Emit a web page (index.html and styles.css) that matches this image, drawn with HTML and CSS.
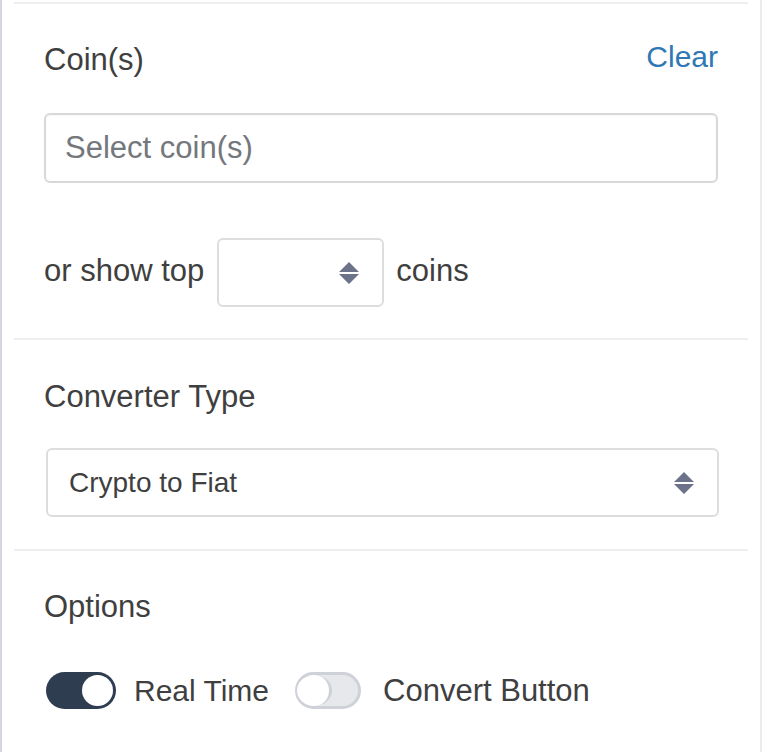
FILE: index.html
```html
<!DOCTYPE html>
<html>
<head>
<meta charset="utf-8">
<link rel="stylesheet" href="styles.css">
</head>
<body>
<div class="panel">
  <section class="section">
    <div class="head-row">
      <span class="label">Coin(s)</span>
      <a class="clear">Clear</a>
    </div>
    <div class="text-input">Select coin(s)</div>
    <div class="top-row">
      <span>or show top</span>
      <div class="num-input">
        <svg class="arrows" width="20" height="22" viewBox="0 0 20 22"><path d="M10 0 L20 10 L0 10 Z M0 12 L20 12 L10 22 Z" fill="#6b7289"/></svg>
      </div>
      <span>coins</span>
    </div>
  </section>
  <section class="section sec2">
    <div class="label">Converter Type</div>
    <div class="select-box">
      <span>Crypto to Fiat</span>
      <svg class="arrows" width="20" height="22" viewBox="0 0 20 22"><path d="M10 0 L20 10 L0 10 Z M0 12 L20 12 L10 22 Z" fill="#6b7289"/></svg>
    </div>
  </section>
  <section class="section sec3">
    <div class="label">Options</div>
    <div class="toggles">
      <span class="toggle on"><span class="knob"></span></span>
      <span class="toggle-label rt">Real Time</span>
      <span class="toggle off"><span class="knob"></span></span>
      <span class="toggle-label cb">Convert Button</span>
    </div>
  </section>
</div>
</body>
</html>
```

FILE: styles.css
```css
html, body {
  margin: 0;
  padding: 0;
  background: #fff;
}
body {
  font-family: "Liberation Sans", Arial, sans-serif;
  font-size: 31px;
  color: #3f3f3f;
}
.panel {
  width: 762px;
  height: 752px;
  box-sizing: border-box;
  border-left: 2px solid #d4d7dd;
  border-right: 2px solid #ebebeb;
  padding: 2px 12px 0;
}
.section {
  border-top: 2px solid #eeeeee;
  padding: 38px 30px 31px 30px;
}
.label {
  line-height: 36px;
  height: 36px;
}
.head-row {
  display: flex;
  justify-content: space-between;
  align-items: center;
  height: 36px;
  line-height: 36px;
}
.clear {
  color: #2f78b4;
  font-size: 30px;
  margin-top: -6px;
  cursor: pointer;
}
.text-input {
  margin-top: 35px;
  height: 70px;
  box-sizing: border-box;
  border: 2px solid #d8d8d8;
  border-radius: 6px;
  padding-left: 19px;
  display: flex;
  align-items: center;
  color: #74777c;
  box-shadow: inset 0 1px 2px rgba(0,0,0,0.04);
}
.top-row {
  margin-top: 55px;
  display: flex;
  align-items: center;
  height: 69px;
  line-height: 36px;
}
.top-row span {
  margin-top: -3px;
}
.num-input {
  width: 167px;
  height: 69px;
  box-sizing: border-box;
  border: 2px solid #dddddd;
  border-radius: 6px;
  margin: 0 12px 0 13px;
  display: flex;
  align-items: center;
  justify-content: flex-end;
  padding-right: 23px;
}
.sec2 {
  padding-top: 39px;
  padding-bottom: 32px;
}
.select-box {
  margin: 33px -1px 0 2px;
  height: 69px;
  box-sizing: border-box;
  border: 2px solid #dddddd;
  border-radius: 6px;
  display: flex;
  align-items: center;
  justify-content: space-between;
  padding: 0 23px 0 21px;
  font-size: 28px;
}
.sec3 {
  padding-top: 38px;
}
.toggles {
  margin-top: 47px;
  display: flex;
  align-items: center;
  height: 37px;
}
.toggle {
  box-sizing: border-box;
  height: 37px;
  border-radius: 19px;
  display: flex;
  align-items: center;
}
.toggle .knob {
  box-sizing: border-box;
  border-radius: 50%;
  background: #fff;
}
.toggle.on {
  width: 70px;
  margin-left: 2px;
  background: #2f3d50;
  justify-content: flex-end;
  padding-right: 3px;
}
.toggle.on .knob {
  width: 31px;
  height: 31px;
}
.toggle.off {
  width: 66px;
  margin-left: 26px;
  background: #e7e8ec;
  border: 3px solid #cfd1d9;
  justify-content: flex-start;
}
.toggle.off .knob {
  width: 35px;
  height: 31px;
  border-right: 3px solid #cfd1d9;
  margin-left: -1px;
}
.toggle-label.rt {
  margin-left: 18px;
  font-size: 30px;
}
.toggle-label.cb {
  margin-left: 22px;
}
```
